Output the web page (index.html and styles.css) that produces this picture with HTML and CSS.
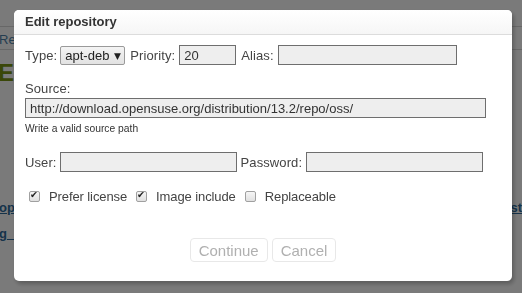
FILE: index.html
```html
<!DOCTYPE html>
<html lang="en">

<head>
    <meta charset="UTF-8">
    <meta name="viewport" content="width=device-width, initial-scale=1.0">
    <title>Edit repository</title>
    <link rel="stylesheet" href="styles.css">
</head>

<body>
    <div class="page">
        <div class="crumbs"></div>
        <nav class="tabs"><a href="#">Repositories</a></nav>
        <h1 class="title">Edit repository list</h1>
        <div class="list">
            <div class="list-row"><a href="#" class="cell">opensuse_oss</a><a href="#" class="cell-right">st</a></div>
            <div class="list-row"><a href="#" class="cell">g_update</a></div>
        </div>
    </div>

    <div class="overlay"></div>

    <div class="modal">
        <header class="modal-header">Edit repository</header>
        <section class="modal-body">
            <div class="row">
                <label class="lbl">Type:</label>
                <div class="select">apt-deb <span class="arrow">&#9660;</span></div>
                <label class="lbl">Priority:</label>
                <input class="field field-priority" type="text" value="20">
                <label class="lbl">Alias:</label>
                <input class="field field-alias" type="text">
            </div>

            <label class="lbl block">Source:</label>
            <input class="field field-source" type="text" value="http://download.opensuse.org/distribution/13.2/repo/oss/">
            <div class="hint">Write a valid source path</div>

            <div class="row row-user">
                <label class="lbl lbl-user">User:</label>
                <input class="field field-user" type="text">
                <label class="lbl">Password:</label>
                <input class="field field-user" type="password">
            </div>

            <div class="checks">
                <label class="check"><input type="checkbox" checked>Prefer license</label>
                <label class="check"><input type="checkbox" checked>Image include</label>
                <label class="check"><input type="checkbox">Replaceable</label>
            </div>

            <div class="actions">
                <button class="btn" disabled>Continue</button>
                <button class="btn" disabled>Cancel</button>
            </div>
        </section>
    </div>
</body>

</html>
```

FILE: styles.css
```css
body {
    margin: 0;
    padding: 0;
    font-family: "Liberation Sans", Arial, sans-serif;
    font-size: 13px;
    color: #333;
    background-color: #ffffff;
    overflow: hidden;
}

/* page behind the dialog */
.page {
    width: 522px;
    height: 293px;
}

.crumbs {
    height: 26px;
    border-bottom: 1px solid #d8d8d8;
}

.tabs {
    height: 22px;
    border-bottom: 1px solid #d8d8d8;
}

.tabs a {
    display: inline-block;
    line-height: 26px;
    color: #4b7fa8;
    text-decoration: none;
    font-size: 13px;
    margin-left: -1px;
}

.title {
    margin: 10px 0 0 -2px;
    font-size: 24px;
    line-height: 26px;
    color: #7a9414;
}

.list {
    margin-top: 115px;
}

.list-row {
    display: flex;
    height: 26px;
    line-height: 14px;
}

.cell,
.cell-right {
    font-weight: bold;
    color: #2e6b9c;
    font-size: 13px;
}

.cell {
    width: 514px;
    margin-left: -1px;
}

.overlay {
    position: fixed;
    inset: 0;
    background-color: rgba(0, 0, 0, 0.52);
}

/* dialog */
.modal {
    position: fixed;
    left: 14px;
    top: 10px;
    width: 498px;
    background-color: #ffffff;
    border-radius: 5px;
    box-shadow: 2px 3px 4px rgba(0, 0, 0, 0.25);
    overflow: hidden;
}

.modal-header {
    height: 24px;
    line-height: 23px;
    padding-left: 11px;
    font-weight: bold;
    color: #333;
    background-image: linear-gradient(#ffffff, #f6f6f6);
    border-bottom: 1px solid #dcdcdc;
}

.modal-body {
    padding: 10px 11px 19px;
}

.row {
    display: flex;
    align-items: center;
    height: 20px;
}

.lbl {
    color: #444;
    margin-right: 4px;
    letter-spacing: 0.1px;
}

.lbl-user {
    margin-right: 3px;
}

.lbl.block {
    display: block;
    line-height: 16px;
    margin-top: 16px;
}

.field {
    box-sizing: border-box;
    height: 20px;
    margin: 0 5px 0 0;
    padding: 0 4px;
    border: 1px solid #6e6e6e;
    background-color: #eeeeee;
    font-family: "Liberation Sans", Arial, sans-serif;
    font-size: 13px;
    color: #333;
    outline: none;
}

.select {
    box-sizing: border-box;
    width: 65px;
    height: 19px;
    margin: 0 5px 0 -1px;
    padding-left: 4px;
    line-height: 17px;
    border: 1px solid #9a9a9a;
    border-radius: 2px;
    background-image: linear-gradient(#f4f4f4, #e2e2e2);
    color: #222;
    white-space: nowrap;
}

.arrow {
    font-family: "DejaVu Sans", sans-serif;
    font-size: 9px;
    vertical-align: 1px;
    margin-left: 1px;
}

.field-priority {
    width: 57px;
}

.field-alias {
    width: 179px;
}

.field-source {
    display: block;
    width: 461px;
    margin-top: 1px;
}

.hint {
    margin-top: 5px;
    line-height: 12px;
    font-size: 10.3px;
    color: #333;
}

.row-user {
    margin-top: 17px;
}

.field-user {
    width: 177px;
}

.field-user + .lbl {
    margin-left: -1px;
}

.checks {
    display: flex;
    align-items: center;
    height: 16px;
    margin-top: 16px;
    padding-left: 4px;
}

.check {
    display: flex;
    align-items: center;
    margin-right: 9px;
    color: #444;
    letter-spacing: -0.1px;
}

.check input {
    appearance: none;
    box-sizing: border-box;
    width: 11px;
    height: 11px;
    margin: 0 9px 0 0;
    border: 1px solid #a0a0a0;
    border-radius: 2px;
    background-image: linear-gradient(#f6f6f6, #e0e0e0);
    position: relative;
}

.check input:checked::after {
    content: "\2714";
    position: absolute;
    left: 0;
    top: -3px;
    font-family: "DejaVu Sans", sans-serif;
    font-size: 9.5px;
    color: #222;
}

.actions {
    display: flex;
    justify-content: center;
    gap: 4px;
    margin-top: 34px;
}

.btn {
    height: 24px;
    padding: 0 8px;
    border: 1px solid #e8e8e8;
    border-radius: 4px;
    background-color: #ffffff;
    font-family: "Liberation Sans", Arial, sans-serif;
    font-size: 15px;
    color: #b0b0b0;
}
```
